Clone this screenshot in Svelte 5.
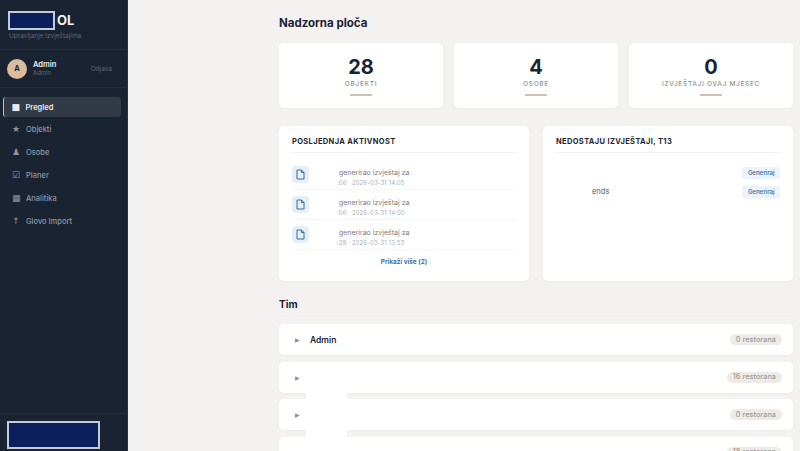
<script>
  const nav = [
    { label: 'Pregled', icon: '■', active: true },
    { label: 'Objekti', icon: '★' },
    { label: 'Osobe', icon: '♟' },
    { label: 'Planer', icon: '☑' },
    { label: 'Analitika', icon: '▦' },
    { label: 'Glovo Import', icon: '↑' }
  ];
  const stats = [
    { n: '28', l: 'OBJEKTI' },
    { n: '4', l: 'OSOBE' },
    { n: '0', l: 'IZVJEŠTAJI OVAJ MJESEC' }
  ];
  const activity = [
    { t: 'generirao izvještaj za', s: ':06 · 2026-03-31 14:05' },
    { t: 'generirao izvještaj za', s: ':06 · 2026-03-31 14:00' },
    { t: 'generirao izvještaj za', s: ':29 · 2026-03-31 13:53' }
  ];
  const team = [
    { name: 'Admin', c: '0 restorana' },
    { name: '', c: '16 restorana' },
    { name: '', c: '0 restorana' },
    { name: '', c: '18 restorana' }
  ];
</script>

<div class="app">
  <aside class="side">
    <div class="brand">
      <div class="logo"><span class="redact"></span><span class="ol">OL</span></div>
      <div class="tag">Upravljanje izvještajima</div>
    </div>
    <div class="user">
      <div class="avatar">A</div>
      <div class="who"><div class="nm">Admin</div><div class="rl">Admin</div></div>
      <div class="out">Odjava</div>
    </div>
    <nav class="nav">
      {#each nav as n}
        <div class="item" class:active={n.active}>
          <span class="ic">{n.icon}</span><span>{n.label}</span>
        </div>
      {/each}
    </nav>
    <div class="foot"><div class="redact2"></div></div>
  </aside>

  <main class="main">
    <h1>Nadzorna ploča</h1>
    <section class="stats">
      {#each stats as s}
        <div class="stat">
          <div class="num">{s.n}</div>
          <div class="lab">{s.l}</div>
          <div class="bar"></div>
        </div>
      {/each}
    </section>
    <section class="panels">
      <div class="panel">
        <h2>POSLJEDNJA AKTIVNOST</h2>
        <div class="acts">
          {#each activity as a}
            <div class="act">
              <div class="doc">
                <svg width="9" height="11" viewBox="0 0 9 11" fill="none" stroke="#2f6ea5" stroke-width="1"><path d="M1 1h4.5L8 3.5V10H1z"/><path d="M5.5 1v2.5H8"/></svg>
              </div>
              <div class="txt"><div class="t">{a.t}</div><div class="s">{a.s}</div></div>
            </div>
          {/each}
        </div>
        <div class="more">Prikaži više (2)</div>
      </div>
      <div class="panel">
        <h2>NEDOSTAJU IZVJEŠTAJI, T13</h2>
        <div class="misses">
          <div class="miss"><span></span><span class="gen">Generiraj</span></div>
          <div class="miss"><span class="ends">ends</span><span class="gen">Generiraj</span></div>
        </div>
      </div>
    </section>
    <h3>Tim</h3>
    <section class="team">
      {#each team as m}
        <div class="row">
          <span class="arr">▶</span>
          <span class="mn">{m.name}</span>
          <span class="pill">{m.c}</span>
        </div>
      {/each}
      <div class="patch"></div>
    </section>
  </main>
</div>

<style>
  :global(body) { margin: 0; background: #f3f2f0; }
  .app {
    display: flex; width: 800px; height: 451px; overflow: hidden;
    font-family: Inter, "Liberation Sans", sans-serif; background: #f3f2f0;
  }
  .side {
    width: 127px; flex: none; background: #1a2332; color: #fff;
    display: flex; flex-direction: column; border-right: 1px solid #2a3341;
  }
  .brand { height: 50px; padding: 10px 0 0 8px; box-sizing: border-box; border-bottom: 1px solid #242d3b; }
  .logo { display: flex; align-items: center; height: 20px; }
  .redact { width: 47px; height: 19px; box-sizing: border-box; background: #0a1f5c; border: 2px solid #c4cbd9; }
  .ol { font-size: 13px; font-weight: 700; margin-left: 2px; color: #f2f3f5; }
  .tag { font-size: 6.5px; color: #5d6878; margin-top: 2px; margin-left: 1px; }
  .user {
    height: 38px; box-sizing: border-box; display: flex; align-items: center; padding: 0 15px 0 7px;
    border-bottom: 1px solid #242d3b;
  }
  .avatar {
    width: 20px; height: 20px; border-radius: 50%; background: #d9bd9c; color: #2a2a2a;
    font-size: 7.5px; font-weight: 700; display: flex; align-items: center; justify-content: center;
  }
  .who { margin-left: 6px; flex: 1; line-height: 1; }
  .nm { font-size: 7.5px; font-weight: 600; color: #eceef1; }
  .rl { font-size: 6px; color: #5d6878; margin-top: 2px; }
  .out { font-size: 6.5px; color: #5d6878; }
  .nav { padding: 9px 6px 0 3px; display: flex; flex-direction: column; gap: 2.9px; }
  .item {
    height: 20px; display: flex; align-items: center; padding-left: 9px; border-radius: 3px;
    font-size: 7.5px; font-weight: 500; color: #8d96a3;
  }
  .item.active { background: #333a46; color: #e8eaee; font-weight: 600; border-left: 1.5px solid #cdbda6; padding-left: 7.5px; }
  .ic { width: 8px; margin-right: 6px; font-size: 9px; text-align: center; line-height: 1; font-family: "DejaVu Sans", sans-serif; }
  .foot { margin-top: auto; height: 38px; border-top: 1px solid #242d3b; padding: 7px 0 0 7px; box-sizing: border-box; }
  .redact2 { width: 93px; height: 28px; box-sizing: border-box; background: #0a1f5c; border: 2px solid #c4cbd9; }

  .main { flex: 1; padding: 0 7px 0 151px; min-width: 0; }
  h1 { margin: 16px 0 0; font-size: 11.5px; line-height: 15px; font-weight: 700; color: #1a2332; }
  .stats { display: grid; grid-template-columns: repeat(3, 164px); gap: 11px; margin-top: 12px; }
  .stat {
    height: 65px; background: #fff; border-radius: 5px; display: flex; flex-direction: column; align-items: center;
    box-shadow: 0 1px 2px rgba(0,0,0,.03);
  }
  .num { margin-top: 12px; font-size: 20px; line-height: 24px; font-weight: 700; color: #1a2332; }
  .lab { font-size: 6.5px; line-height: 10px; letter-spacing: .7px; color: #909294; font-weight: 500; }
  .bar { width: 22px; height: 1.5px; background: #cdc3b5; margin-top: 5px; }
  .panels { display: grid; grid-template-columns: 250px 250px; gap: 14px; margin-top: 18px; }
  .panel { height: 155px; background: #fff; border-radius: 5px; padding: 0 13px; box-sizing: border-box; box-shadow: 0 1px 2px rgba(0,0,0,.03); }
  h2 {
    margin: 0; height: 27px; font-size: 7.5px; line-height: 8px; padding-top: 12px; box-sizing: border-box;
    letter-spacing: .35px; font-weight: 700; color: #1f2733; border-bottom: 1px solid #f1f0ee;
  }
  .acts { margin-top: 7px; }
  .act { height: 30px; box-sizing: border-box; display: flex; align-items: center; border-bottom: 1px solid #f6f5f4; }
  .doc {
    width: 17px; height: 17px; border-radius: 4px; background: #e8eef5; flex: none;
    display: flex; align-items: center; justify-content: center; margin-right: 30px;
  }
  .txt { margin-top: 5px; }
  .t { font-size: 7px; line-height: 10px; color: #7a7b7d; }
  .s { font-size: 6px; line-height: 8px; color: #aeafb1; margin-top: 1px; margin-left: -2px; letter-spacing: .1px; }
  .more { text-align: center; font-size: 6.5px; font-weight: 600; color: #2f6094; margin-top: 8px; }
  .misses { margin-top: 10px; }
  .miss { height: 19px; display: flex; justify-content: space-between; align-items: center; padding-left: 36px; }
  .ends { font-size: 7.5px; color: #55585e; }
  .gen {
    background: #edf3fa; color: #4a74a3; font-size: 6px; font-weight: 600; padding: 2px 5.5px; border-radius: 2px; line-height: 8px;
  }
  h3 {
    margin: 16px 0 0; height: 19px; font-size: 10px; line-height: 15px; font-weight: 700; color: #1a2332;
    border-bottom: 1px solid #f4efed;
  }
  .team { position: relative; display: flex; flex-direction: column; gap: 6.5px; margin-top: 7px; }
  .row {
    height: 31px; flex: none; background: #fff; border-radius: 5px; display: flex; align-items: center; padding: 0 11px 0 16px;
    box-shadow: 0 1px 2px rgba(0,0,0,.03);
  }
  .arr { font-size: 6px; color: #8b8f96; width: 15px; font-family: "DejaVu Sans", sans-serif; }
  .mn { font-size: 8.5px; font-weight: 600; color: #1f2733; flex: 1; }
  .pill { background: #ecebe7; color: #9a9a96; font-size: 7.2px; font-weight: 500; padding: 2.5px 6px; border-radius: 6px; line-height: 6px; letter-spacing: .1px; }
  .patch { position: absolute; left: 27px; top: 68px; width: 41px; height: 45px; background: #fff; }
</style>
